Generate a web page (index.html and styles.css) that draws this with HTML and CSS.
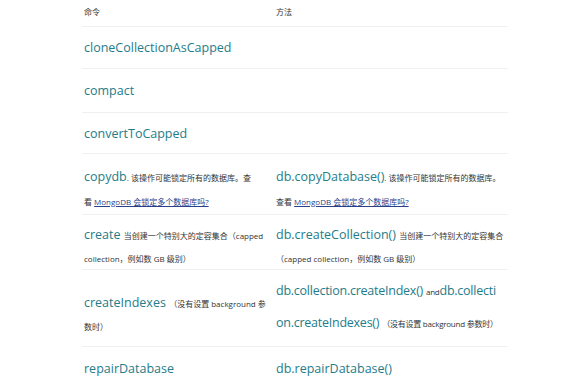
FILE: index.html
```html
<!DOCTYPE html>
<html lang="zh">
<head>
<meta charset="utf-8">
<link rel="stylesheet" href="styles.css">
</head>
<body>
<table class="cmds">
  <thead>
    <tr><th class="c1">命令</th><th class="c2">方法</th></tr>
  </thead>
  <tbody>
    <tr class="r1"><td><span class="m">cloneCollectionAsCapped</span></td><td></td></tr>
    <tr class="r2"><td><span class="m">compact</span></td><td></td></tr>
    <tr class="r3"><td><span class="m">convertToCapped</span></td><td></td></tr>
    <tr class="r4"><td><span class="m">copydb</span><span class="s">. 该操作可能锁定所有的数据库。查<br>看 <a href="#">MongoDB 会锁定多个数据库吗?</a></span></td><td><span class="m">db.copyDatabase()</span><span class="s">. 该操作可能锁定所有的数据库。<br>查看 <a href="#">MongoDB 会锁定多个数据库吗?</a></span></td></tr>
    <tr class="r5"><td><span class="m">create</span> <span class="s">当创建一个特别大的定容集合（capped<br>collection，例如数 GB 级别）</span></td><td><span class="m">db.createCollection()</span> <span class="s">当创建一个特别大的定容集合<br>（capped collection，例如数 GB 级别）</span></td></tr>
    <tr class="r6"><td class="lft"><span class="m">createIndexes</span> <span class="s">（没有设置 background 参<br>数时）</span></td><td class="rgt"><span class="m">db.collection.createIndex()</span> <span class="s">and</span><span class="m">db.collecti<br>on.createIndexes()</span> <span class="s">（没有设置 background 参数时）</span></td></tr>
    <tr class="r7"><td><span class="m">repairDatabase</span></td><td><span class="m">db.repairDatabase()</span></td></tr>
  </tbody>
</table>
</body>
</html>
```
FILE: styles.css
```css
html, body {
  margin: 0;
  padding: 0;
  background: #fff;
}
body {
  font-family: "Open Sans", "Noto Sans CJK SC", sans-serif;
  color: #333;
}
.cmds {
  margin-left: 82px;
  width: 426px;
  border-collapse: collapse;
  table-layout: fixed;
}
.cmds th {
  font-weight: normal;
  font-size: 8px;
  text-align: left;
  height: 26px;
  padding: 0 2px;
  vertical-align: top;
  line-height: 24px;
  color: #333;
  border-bottom: 1px solid #f0f0f0;
}
.c1 { width: 188px; }
.cmds td {
  padding: 0 2px;
  vertical-align: middle;
  border-bottom: 1px solid #f0f0f0;
  font-size: 12.5px;
  line-height: 23px;
  white-space: nowrap;
}
.r1 td { height: 41px; }
.r2 td { height: 43px; }
.r3 td { height: 40px; }
.r4 td { height: 49px; vertical-align: top; padding-top: 11px; line-height: 24px; }
.r5 td { height: 45px; vertical-align: top; padding-top: 8px; line-height: 23px; }
.r6 td { vertical-align: top; }
.r6 td.lft { height: 55px; padding-top: 21px; line-height: 23px; }
.r6 td.rgt { height: 70px; padding-top: 5px; line-height: 32px; letter-spacing: -0.25px; }
.r7 td { height: 43px; }
.m {
  font-size: 12.5px;
  color: #247c8a;
}
.s {
  font-size: 8px;
  line-height: 10px;
  color: #333;
}
.s a {
  color: #2b3f8a;
  text-decoration: underline;
}
```
